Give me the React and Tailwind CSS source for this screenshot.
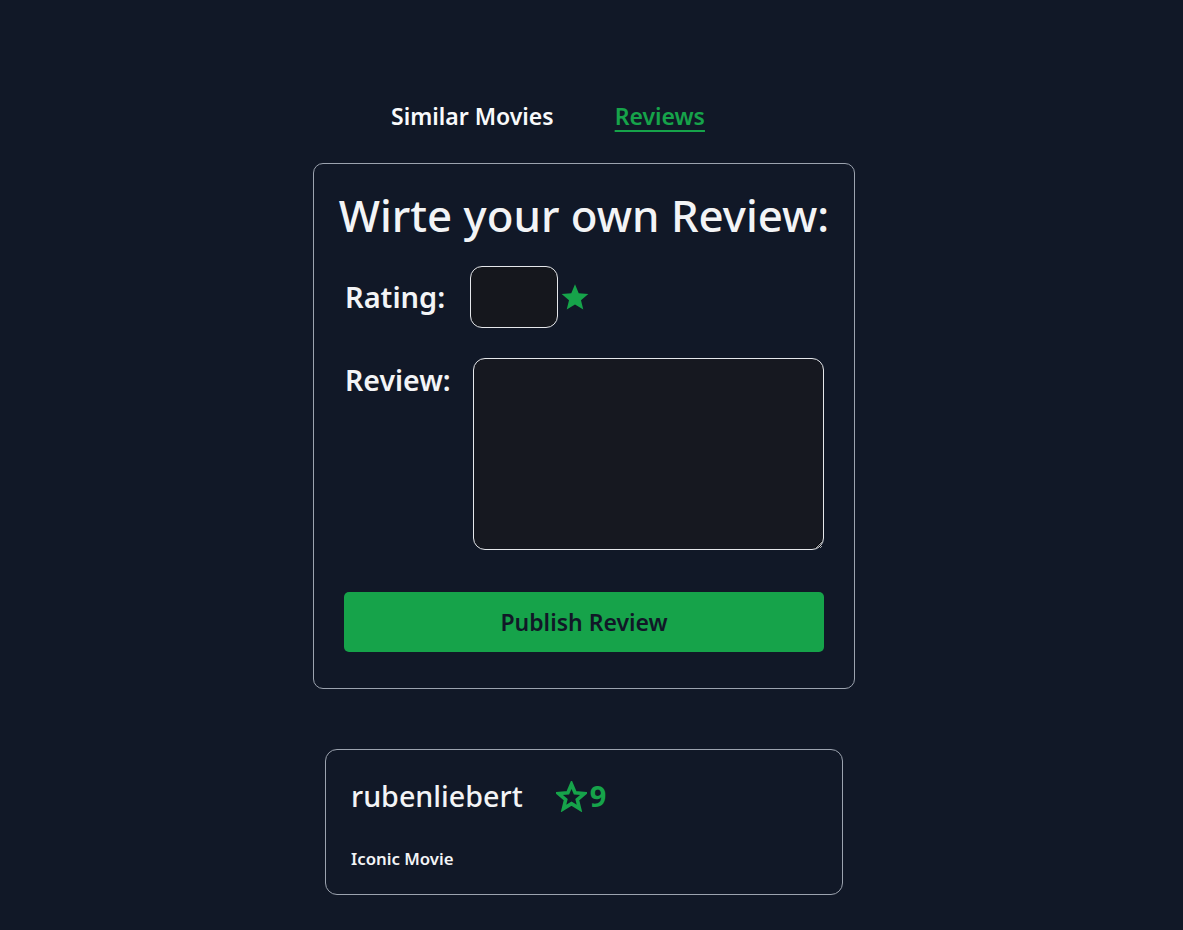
import React from "react";

const STAR = "M12 2.5l2.8 6.6 7.2.6-5.5 4.7 1.7 7-6.2-3.8-6.2 3.8 1.7-7L2 9.7l7.2-.6z";

export default function App() {
  return (
    <div
      className="min-h-[930px] w-full bg-[#111827] text-[#f3f4f6]"
      style={{ fontFamily: '"Noto Sans", "Open Sans", sans-serif' }}
    >
      <div className="flex justify-center pr-[15px]">
        <div className="flex w-[542px] flex-col pt-[100px]">
          <div className="ml-[78px] flex items-center gap-[61px] text-[23px] font-semibold leading-[32px]">
            <button className="text-[#f9fafb]">Similar Movies</button>
            <button className="text-[#16a34a] underline decoration-2 underline-offset-[5px]">Reviews</button>
          </div>

          <div className="mt-[31px] flex h-[526px] flex-col rounded-[10px] border border-[#9ca3af] px-[30px] pt-[23px]">
            <h2 className="-mx-[25px] whitespace-nowrap text-center text-[43.8px] font-medium leading-[56px] text-[#f3f4f6]">
              Wirte your own Review:
            </h2>
            <div className="mt-[23px] flex items-center">
              <label className="ml-[1px] w-[125px] text-[29px] font-semibold text-[#f3f4f6]">Rating:</label>
              <div className="h-[62px] w-[88px] rounded-[12px] border border-[#e5e7eb] bg-[#15171d]" />
              <svg width="32" height="32" viewBox="0 0 24 24" className="ml-[1px]">
                <path d={STAR} fill="#16a34a" />
              </svg>
            </div>
            <div className="mt-[30px] flex items-start">
              <label className="ml-[1px] w-[128px] text-[28.5px] font-semibold leading-[44px] text-[#f3f4f6]">Review:</label>
              <textarea className="h-[192px] w-[351px] rounded-[12px] border border-[#e5e7eb] bg-[#161820] p-2 text-white outline-none" />
            </div>
            <button className="mt-[42px] h-[60px] w-[480px] rounded-[5px] bg-[#16a34a] text-[23px] font-semibold text-[#111827]">
              Publish Review
            </button>
          </div>

          <div className="mx-auto mt-[60px] flex h-[146px] w-[518px] flex-col rounded-[12px] border border-[#9ca3af] px-[25px] pt-[26px]">
            <div className="flex items-center">
              <span className="text-[28.7px] font-medium leading-[40px] text-[#f3f4f6]">rubenliebert</span>
              <div className="ml-[33px] flex items-center text-[#16a34a]">
                <svg width="31" height="31" viewBox="0 0 24 24">
                  <path d={STAR} fill="none" stroke="#16a34a" strokeWidth="2.8" strokeLinejoin="miter" />
                </svg>
                <span className="ml-[3px] text-[29px] font-bold leading-[40px]">9</span>
              </div>
            </div>
            <p className="mt-[30px] text-[16.8px] font-semibold text-[#f3f4f6]">Iconic Movie</p>
          </div>
        </div>
      </div>
    </div>
  );
}
